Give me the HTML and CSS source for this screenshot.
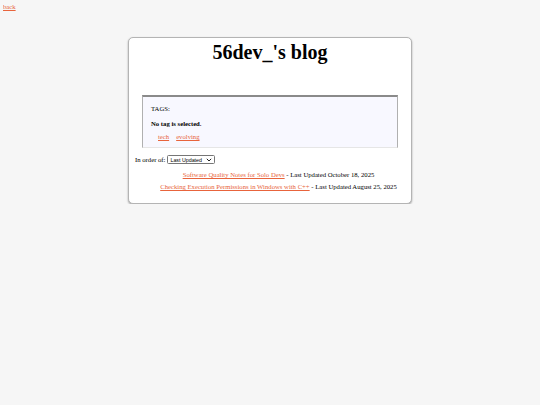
FILE: index.html
```
<!DOCTYPE html>
<html lang="en">
<head>
<meta charset="utf-8">
<title>56dev_'s blog</title>
<link rel="stylesheet" href="styles.css">
</head>
<body>
<a class="back" href="#">back</a>
<main class="card">
  <h1 class="title">56dev_'s blog</h1>
  <section class="tags">
    <p class="tags-label">TAGS:</p>
    <p class="tags-state">No tag is selected.</p>
    <p class="tags-list"><a href="#">tech</a><a href="#">evolving</a></p>
  </section>
  <div class="order">
    <label for="order">In order of:</label>
    <span class="select-wrap">
      <select id="order" class="order-select">
        <option>Last Updated</option>
        <option>Created</option>
      </select>
      <svg class="select-arrow" width="6" height="4" viewBox="0 0 6 4"><path d="M0.8 0.8 L3 3 L5.2 0.8" fill="none" stroke="#222" stroke-width="1"/></svg>
    </span>
  </div>
  <ul class="posts">
    <li><a href="#">Software Quality Notes for Solo Devs</a> - Last Updated October 18, 2025</li>
    <li><a href="#">Checking Execution Permissions in Windows with C++</a> - Last Updated August 25, 2025</li>
  </ul>
</main>
</body>
</html>
```
FILE: styles.css
```
html {
  background: #f6f6f6;
}
body {
  margin: 3px;
  font-family: "Liberation Serif", "Times New Roman", serif;
  font-size: 6.7px;
  color: #000;
}
a {
  color: #e8643c;
}
.back {
  display: inline-block;
}
.card {
  width: 282px;
  margin: 27px auto 0;
  background: #fff;
  border: 1px solid #b4b4b4;
  border-radius: 5px;
  box-shadow: 0 1px 2px rgba(0, 0, 0, 0.35);
  padding: 0 0 7px;
}
.title {
  margin: 0;
  padding-top: 3px;
  text-align: center;
  font-size: 20px;
  font-weight: bold;
}
.tags {
  margin: 31px 13px 0;
  padding: 1px 8px 0;
  background: #f8f8ff;
  border-style: solid;
  border-width: 2px 1px 1px 1px;
  border-color: #8a8a8a #b0b0b0 #e6e6e6 #b0b0b0;
}
.tags p {
  margin: 7px 0;
  line-height: 8px;
}
.tags .tags-state {
  margin-bottom: 5px;
}
.tags .tags-list {
  margin-top: 5px;
  margin-bottom: 6px;
}
.tags-state {
  font-weight: bold;
}
.tags-list {
  display: flex;
  gap: 7px;
  padding-left: 7px;
}
.order {
  margin: 7px 6px 0;
  display: flex;
  align-items: center;
  gap: 2px;
}
.select-wrap {
  position: relative;
  display: inline-block;
}
.order-select {
  appearance: none;
  -webkit-appearance: none;
  font-family: "Liberation Sans", Arial, sans-serif;
  font-size: 5.3px;
  height: 9px;
  width: 48px;
  padding: 0 0 0 2px;
  border: 1px solid #767676;
  border-radius: 1.5px;
  background: #fff;
  color: #000;
  display: block;
}
.select-arrow {
  position: absolute;
  right: 3px;
  top: 2.5px;
  pointer-events: none;
}
.posts {
  list-style: none;
  margin: 7px 0 0;
  padding: 0 0 0 17px;
  text-align: center;
}
.posts li {
  margin-bottom: 5.3px;
}
```
